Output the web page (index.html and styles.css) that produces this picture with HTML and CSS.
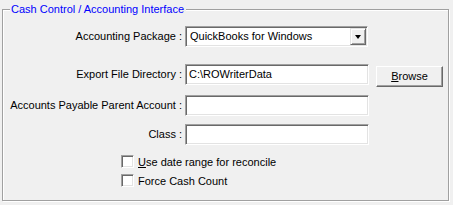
FILE: index.html
```html
<!DOCTYPE html>
<html>
<head>
<meta charset="utf-8">
<link rel="stylesheet" href="styles.css">
</head>
<body>
<div class="group">
  <div class="legend">Cash Control / Accounting Interface</div>
  <div class="row r1">
    <div class="label">Accounting Package :</div>
    <div class="select">
      <div class="select-text">QuickBooks for Windows</div>
      <div class="drop"><span class="tri"></span></div>
    </div>
  </div>
  <div class="row r2">
    <div class="label">Export File Directory :</div>
    <div class="input">C:\ROWriterData</div>
    <div class="button"><u>B</u>rowse</div>
  </div>
  <div class="row r3">
    <div class="label">Accounts Payable Parent Account :</div>
    <div class="input"></div>
  </div>
  <div class="row r4">
    <div class="label">Class :</div>
    <div class="input"></div>
  </div>
  <div class="check c1"><span class="box"></span><span><u>U</u>se date range for reconcile</span></div>
  <div class="check c2"><span class="box"></span><span>Force Cash Count</span></div>
</div>
</body>
</html>
```
FILE: styles.css
```css
html, body {
  margin: 0;
  padding: 0;
  background: #f0f0f0;
  width: 453px;
  height: 205px;
  overflow: hidden;
  font-family: "Liberation Sans", Arial, sans-serif;
  font-size: 11px;
  color: #000;
}
.group {
  position: relative;
  box-sizing: border-box;
  margin: 9px 0 0 2px;
  width: 447px;
  height: 192px;
  border: 1px solid #a0a0a0;
  box-shadow: inset 1px 1px 0 #fff, 1px 1px 0 #fff;
}
.legend {
  position: absolute;
  top: -7px;
  left: 7px;
  padding: 0 2px 0 1px;
  background: #f0f0f0;
  color: #0000ff;
  line-height: 13px;
}
.row {
  display: flex;
  align-items: flex-start;
}
.r1 { margin-top: 16px; }
.r2 { margin-top: 17px; }
.r3 { margin-top: 8px; }
.r4 { margin-top: 8px; }
.label {
  width: 179px;
  text-align: right;
  line-height: 21px;
  white-space: nowrap;
  margin-right: 3px;
}
.select, .input {
  position: relative;
  box-sizing: border-box;
  height: 21px;
  width: 184px;
  background: #fff;
  border-top: 1px solid #a0a0a0;
  border-left: 1px solid #a0a0a0;
  border-right: 1px solid #fff;
  border-bottom: 1px solid #fff;
  box-shadow: inset 1px 1px 0 #696969, inset -1px -1px 0 #e3e3e3;
  padding-left: 3px;
  line-height: 19px;
  white-space: nowrap;
}
.select { width: 183px; }
.select-text {
  padding-left: 1px;
}
.drop {
  position: absolute;
  top: 1px;
  right: 1px;
  width: 16px;
  height: 17px;
  box-sizing: border-box;
  background: #f0f0f0;
  border-top: 1px solid #e3e3e3;
  border-left: 1px solid #e3e3e3;
  border-right: 1px solid #696969;
  border-bottom: 1px solid #696969;
  box-shadow: inset 1px 1px 0 #fff, inset -1px -1px 0 #a0a0a0;
  display: flex;
  align-items: center;
  justify-content: center;
}
.tri {
  width: 0;
  height: 0;
  border-left: 3.5px solid transparent;
  border-right: 3.5px solid transparent;
  border-top: 4px solid #000;
}
.button {
  box-sizing: border-box;
  margin-left: 7px;
  margin-top: 2px;
  width: 67px;
  height: 21px;
  background: #f0f0f0;
  border-top: 1px solid #fff;
  border-left: 1px solid #fff;
  border-right: 1px solid #696969;
  border-bottom: 1px solid #696969;
  box-shadow: inset -1px -1px 0 #a0a0a0;
  text-align: center;
  line-height: 19px;
}
.check {
  display: flex;
  align-items: center;
  margin-left: 118px;
  height: 13px;
}
.c1 { margin-top: 10px; }
.c2 { margin-top: 6px; }
.box {
  box-sizing: border-box;
  width: 13px;
  height: 13px;
  margin-right: 4px;
  background: #fff;
  border-top: 1px solid #a0a0a0;
  border-left: 1px solid #a0a0a0;
  border-right: 1px solid #fff;
  border-bottom: 1px solid #fff;
  box-shadow: inset 1px 1px 0 #696969, inset -1px -1px 0 #e3e3e3;
}
```
